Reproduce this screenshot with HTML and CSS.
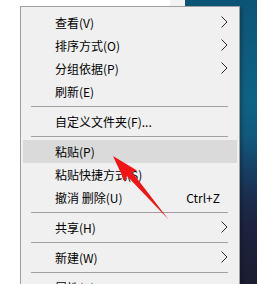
FILE: index.html
```html
<!DOCTYPE html>
<html lang="zh-CN">
<head>
<meta charset="utf-8">
<link rel="stylesheet" href="styles.css">
</head>
<body>
<div class="page">
  <div class="pane-white"></div>
  <div class="pane-strip"></div>
  <div class="desktop"></div>
</div>

<div class="menu">
  <div class="item"><span class="label">查看(V)</span><svg class="chev" width="7" height="12" viewBox="0 0 7 12"><polyline points="0.5,0.5 6,6 0.5,11.5" fill="none" stroke="#2a2a2a" stroke-width="1"/></svg></div>
  <div class="item"><span class="label">排序方式(O)</span><svg class="chev" width="7" height="12" viewBox="0 0 7 12"><polyline points="0.5,0.5 6,6 0.5,11.5" fill="none" stroke="#2a2a2a" stroke-width="1"/></svg></div>
  <div class="item"><span class="label">分组依据(P)</span><svg class="chev" width="7" height="12" viewBox="0 0 7 12"><polyline points="0.5,0.5 6,6 0.5,11.5" fill="none" stroke="#2a2a2a" stroke-width="1"/></svg></div>
  <div class="item"><span class="label">刷新(E)</span></div>
  <div class="sep"></div>
  <div class="item"><span class="label">自定义文件夹(F)...</span></div>
  <div class="sep"></div>
  <div class="item active"><span class="label">粘贴(P)</span></div>
  <div class="item"><span class="label">粘贴快捷方式(S)</span></div>
  <div class="item"><span class="label">撤消 删除(U)</span><span class="shortcut">Ctrl+Z</span></div>
  <div class="sep"></div>
  <div class="item"><span class="label">共享(H)</span><svg class="chev" width="7" height="12" viewBox="0 0 7 12"><polyline points="0.5,0.5 6,6 0.5,11.5" fill="none" stroke="#2a2a2a" stroke-width="1"/></svg></div>
  <div class="sep"></div>
  <div class="item"><span class="label">新建(W)</span><svg class="chev" width="7" height="12" viewBox="0 0 7 12"><polyline points="0.5,0.5 6,6 0.5,11.5" fill="none" stroke="#2a2a2a" stroke-width="1"/></svg></div>
  <div class="sep"></div>
  <div class="item"><span class="label">属性(R)</span></div>
</div>

<svg class="arrow" width="257" height="284" viewBox="0 0 257 284">
  <polygon points="113,156 137,170.5 132,172 168.5,219.5 127,176 125,182" fill="#f21414"/>
</svg>
</body>
</html>
```

FILE: styles.css
```css
html, body {
  margin: 0;
  padding: 0;
}

body {
  width: 257px;
  height: 284px;
  overflow: hidden;
  position: relative;
  font-family: "Noto Sans CJK SC", "Microsoft YaHei", sans-serif;
  font-size: 12px;
  color: #000;
}

.page {
  display: flex;
  width: 257px;
  height: 284px;
}

.pane-white {
  width: 170px;
  background: #ffffff;
}

.pane-strip {
  width: 15px;
  background: #f3f3f3;
}

.desktop {
  flex: 1;
  background: linear-gradient(to bottom,
    #0c5475 0%,
    #0e5c7d 20%,
    #0f6282 35%,
    #10597b 48%,
    #163f63 60%,
    #1b2c4c 70%,
    #1c2240 80%,
    #1c1d31 100%);
}

.menu {
  position: absolute;
  left: 20px;
  top: 6px;
  width: 214px;
  padding: 4px 2px;
  background: #f0f0f0;
  border: 1px solid #a0a0a0;
  box-shadow: 2px 2px 3px rgba(0, 0, 0, 0.25);
}

.item {
  display: flex;
  align-items: center;
  height: 23px;
  padding-left: 32px;
  padding-right: 9px;
  white-space: nowrap;
}

.item .label {
  flex: 1;
  line-height: 23px;
}

.item.active {
  background: #dadada;
}

.chev {
  display: block;
  margin-top: -2px;
}

.shortcut {
  padding-right: 8px;
  line-height: 23px;
}

.sep {
  height: 1px;
  margin: 3px 9px 3px 8px;
  background: #a0a0a0;
}

.arrow {
  position: absolute;
  left: 0;
  top: 0;
  pointer-events: none;
}
```
